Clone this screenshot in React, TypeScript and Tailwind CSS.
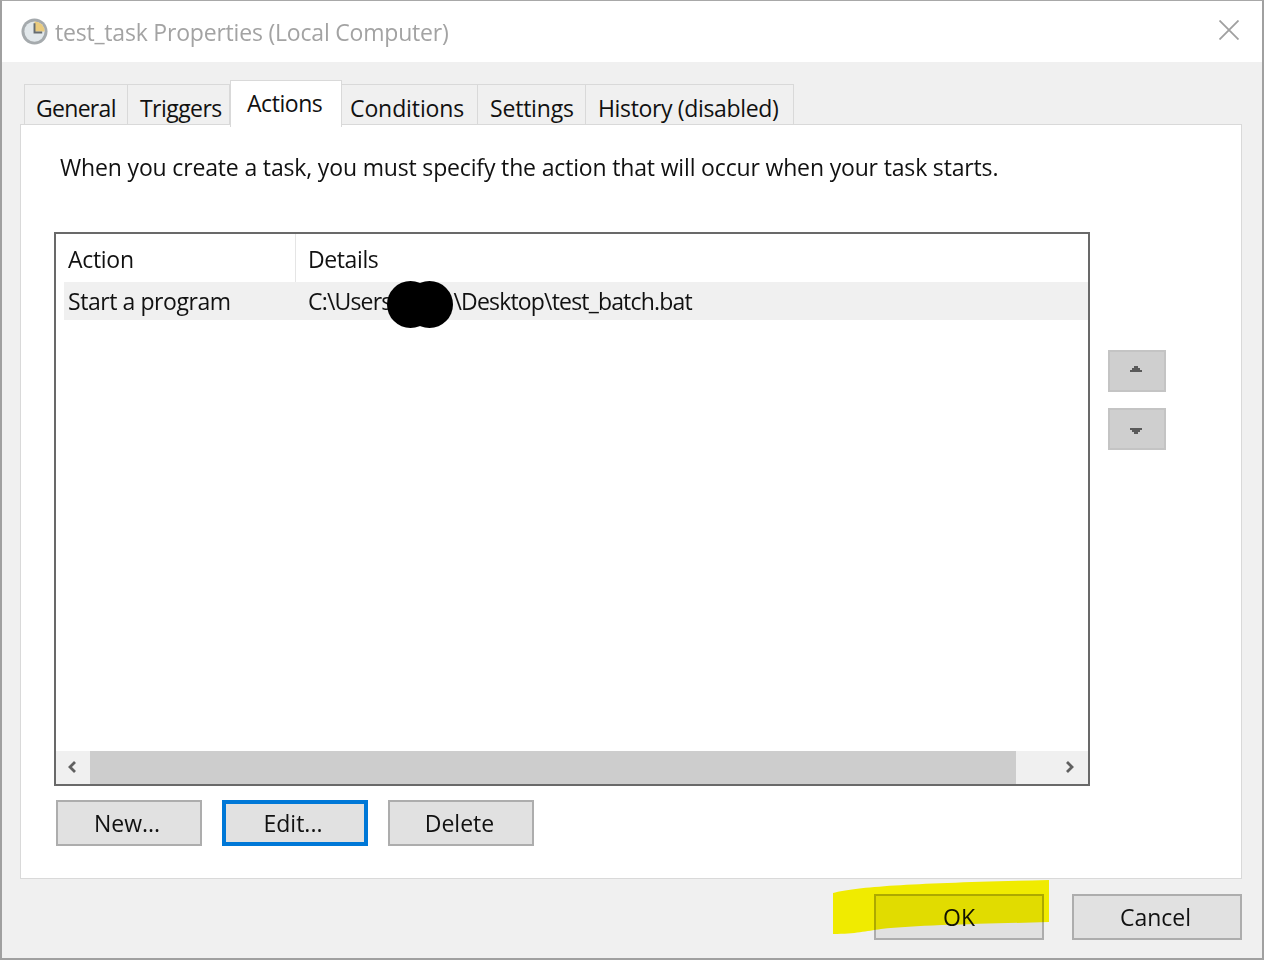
const font = { fontFamily: '"Open Sans", "Noto Sans", sans-serif' };

const tabs = [
  { label: 'General', box: 'w-[104px] pl-[11px] tracking-[-0.7px]' },
  { label: 'Triggers', box: 'w-[102px] pl-[12px] tracking-[-0.55px]' },
  { label: 'Actions', box: 'w-[112px] pl-[16px] tracking-[-0.45px]', active: true },
  { label: 'Conditions', box: 'w-[136px] pl-[8px] tracking-[-0.1px]' },
  { label: 'Settings', box: 'w-[108px] pl-[12px] tracking-[-0.2px]' },
  { label: 'History (disabled)', box: 'w-[208px] pl-[12px] tracking-[-0.35px]' },
];

function ClockIcon() {
  return (
    <svg width="27" height="27" viewBox="0 0 28 28" className="shrink-0">
      <circle cx="14" cy="14" r="13.5" fill="#a5aaad" />
      <circle cx="14" cy="14" r="10.5" fill="#e2e8eb" />
      <path d="M14 3.5 A10.5 10.5 0 0 1 24.5 14 H14 Z" fill="#eacb7d" />
      <path d="M14 5.5 V15 H22" fill="none" stroke="#666c70" strokeWidth="2" />
    </svg>
  );
}

function DialogButton({
  label,
  focused,
  width = 'w-[146px]',
  pad = '',
}: {
  label: string;
  focused?: boolean;
  width?: string;
  pad?: string;
}) {
  return (
    <button
      className={`flex h-[46px] ${width} ${pad} items-center justify-center bg-[#e1e1e1] text-[23px] text-[#111] ${
        focused ? 'border-[4px] border-[#0078d7]' : 'border-2 border-[#adadad]'
      }`}
    >
      {label}
    </button>
  );
}

function MoveButton({ up }: { up?: boolean }) {
  return (
    <button
      className={`flex h-[42px] w-[58px] items-center justify-center border-2 border-[#c4c4c4] bg-[#cfcfcf] pr-[2px] ${
        up ? 'pb-[4px]' : 'pt-[4px]'
      }`}
    >
      <svg width="12" height="6" viewBox="0 0 12 6" fill="#5a5a5a">
        <path
          d={
            up
              ? 'M0 6 V4 H2 V2 H4 V0 H8 V2 H10 V4 H12 V6 Z'
              : 'M0 0 V2 H2 V4 H4 V6 H8 V4 H10 V2 H12 V0 Z'
          }
        />
      </svg>
    </button>
  );
}

export default function App() {
  return (
    <div
      className="relative flex h-[960px] w-[1264px] flex-col overflow-hidden border-x-2 border-t border-b-2 border-x-[#a0a0a0] border-t-[#a8a8a8] border-b-[#a0a0a0] bg-[#f0f0f0]"
      style={font}
    >
      {/* title bar */}
      <div className="-mx-[1px] flex h-[61px] shrink-0 items-center justify-between bg-white pl-[20px] pr-[24px]">
        <div className="flex items-center gap-[7px] text-[23px] text-[#a3a3a3]">
          <ClockIcon />
          <span className="mt-[2px] tracking-[-0.2px]">test_task Properties (Local Computer)</span>
        </div>
        <svg width="20" height="20" viewBox="0 0 20 20" stroke="#a0a0a0" strokeWidth="1.8" className="mb-[3px]">
          <path d="M0.5 0.5 L19.5 19.5 M19.5 0.5 L0.5 19.5" />
        </svg>
      </div>

      <div className="flex flex-1 flex-col pl-[18px] pr-[20px]">
        {/* tabs */}
        <div className="z-10 -mb-[3px] flex h-[65px] shrink-0 items-end pl-[4px] text-[23px] text-[#111]">
          {tabs.map((tab) =>
            tab.active ? (
              <div
                key={tab.label}
                className={`flex h-[47px] ${tab.box} items-center border-x border-t border-[#d9d9d9] bg-white pb-[1px]`}
              >
                {tab.label}
              </div>
            ) : (
              <div
                key={tab.label}
                className={`mb-[3px] flex h-[40px] ${tab.box} items-center border-r border-t border-[#d9d9d9] bg-[#f0f0f0] pt-[7px] first:border-l`}
              >
                {tab.label}
              </div>
            ),
          )}
        </div>

        {/* panel */}
        <div className="flex h-[755px] w-[1222px] shrink-0 flex-col border border-[#d9d9d9] bg-white pl-[33px]">
          <p className="ml-[6px] mt-[25px] h-[82px] text-[23px] leading-[34px] tracking-[-0.16px] text-[#111]">
            When you create a task, you must specify the action that will occur when your task starts.
          </p>

          <div className="flex">
            <div className="flex h-[554px] w-[1036px] flex-col border-2 border-[#696969] bg-white">
              <div className="flex h-[48px] shrink-0 text-[23px] tracking-[-0.3px] text-[#111]">
                <div className="flex w-[240px] items-center border-r border-[#e5e5e5] pl-[12px] pt-[2px]">Action</div>
                <div className="flex items-center pl-[12px] pt-[2px] tracking-[-0.4px]">Details</div>
              </div>
              <div className="relative ml-[8px] flex h-[38px] shrink-0 items-center bg-[#f0f0f0] text-[23px] text-[#111]">
                <div className="w-[232px] pl-[4px] tracking-[-0.43px]">Start a program</div>
                <div className="pl-[12px] tracking-[-0.82px]">
                  C:\Users
                  <span className="ml-[62px]">\Desktop\test_batch.bat</span>
                </div>
                {/* redaction blob */}
                <div className="absolute left-[323px] top-[-1px] h-[47px] w-[47px] rounded-full bg-black" />
                <div className="absolute left-[342px] top-[-1px] h-[47px] w-[47px] rounded-full bg-black" />
              </div>
              <div className="flex-1" />
              {/* scrollbar */}
              <div className="flex h-[33px] shrink-0 bg-[#f0f0f0]">
                <div className="flex w-[34px] items-center justify-center pb-[1px] pr-[2px]">
                  <svg width="10" height="12" viewBox="0 0 10 12" fill="none" stroke="#606060" strokeWidth="2.8">
                    <path d="M8 1 L3 6 L8 11" />
                  </svg>
                </div>
                <div className="w-[926px] bg-[#cdcdcd]" />
                <div className="flex flex-1 items-center justify-end pb-[1px] pr-[13px]">
                  <svg width="10" height="12" viewBox="0 0 10 12" fill="none" stroke="#606060" strokeWidth="2.8">
                    <path d="M2 1 L7 6 L2 11" />
                  </svg>
                </div>
              </div>
            </div>
            <div className="ml-[18px] mt-[118px] flex flex-col gap-[16px]">
              <MoveButton up />
              <MoveButton />
            </div>
          </div>

          <div className="ml-[2px] mt-[14px] flex gap-[20px]">
            <DialogButton label="New..." pad="pr-[4px]" />
            <DialogButton label="Edit..." focused pad="pr-[4px]" />
            <DialogButton label="Delete" pad="pr-[3px]" />
          </div>
        </div>

        {/* footer */}
        <div className="mt-[15px] flex justify-end gap-[28px]">
          <DialogButton label="OK" width="w-[170px]" />
          <DialogButton label="Cancel" width="w-[170px]" pad="pr-[3px]" />
        </div>
      </div>

      {/* highlighter stroke */}
      <svg
        className="pointer-events-none absolute left-[829px] top-[878px] mix-blend-multiply"
        width="220"
        height="56"
        viewBox="0 0 220 56"
      >
        <path
          d="M2 14 C30 7 90 4 218 1 V43 C150 45 90 46 50 50 C35 52 25 55 2 55 Z"
          fill="#fffa00"
        />
      </svg>
    </div>
  );
}
